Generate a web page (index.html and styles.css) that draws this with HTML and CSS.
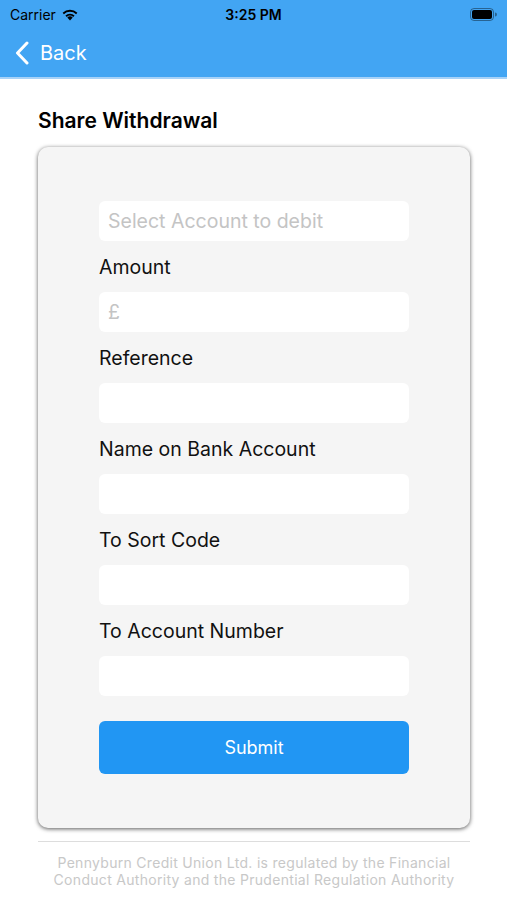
FILE: index.html
```html
<!DOCTYPE html>
<html lang="en">
<head>
    <meta charset="UTF-8">
    <meta name="viewport" content="width=device-width, initial-scale=1.0">
    <title>Share Withdrawal</title>
    <link rel="stylesheet" href="styles.css">
</head>
<body>
    <div id="header">
        <div class="statusBar">
            <div class="carrier">
                Carrier
                <svg class="wifi" width="18" height="13" viewBox="0 0 18 13">
                    <path d="M9 12.5 L6.3 9.6 A4 4 0 0 1 11.7 9.6 Z" fill="#000"/>
                    <path d="M4.4 7.6 A6.8 6.8 0 0 1 13.6 7.6 L12.3 9 A5 5 0 0 0 5.7 9 Z" fill="#000"/>
                    <path d="M1.6 4.8 A10.8 10.8 0 0 1 16.4 4.8 L15.1 6.2 A8.9 8.9 0 0 0 2.9 6.2 Z" fill="#000"/>
                </svg>
            </div>
            <div class="time">3:25 PM</div>
            <div class="battery">
                <svg width="27" height="13" viewBox="0 0 27 13">
                    <rect x="0.5" y="0.5" width="23" height="12" rx="3.5" fill="none" stroke="rgba(0,0,0,0.4)"/>
                    <rect x="2" y="2" width="20" height="9" rx="2" fill="#000"/>
                    <path d="M25 4.5 A2 2 0 0 1 25 8.5 Z" fill="rgba(0,0,0,0.4)"/>
                </svg>
            </div>
        </div>
        <div class="navBar">
            <svg class="chevron" width="14" height="24" viewBox="0 0 14 24">
                <path d="M12 2 L2.5 12 L12 22" fill="none" stroke="#fff" stroke-width="3" stroke-linecap="round" stroke-linejoin="round"/>
            </svg>
            <span>Back</span>
        </div>
    </div>
    <div id="content">
        <h1>Share Withdrawal</h1>
        <div class="card">
            <div class="field">Select Account to debit</div>
            <label>Amount</label>
            <div class="field">£</div>
            <label>Reference</label>
            <div class="field"></div>
            <label>Name on Bank Account</label>
            <div class="field"></div>
            <label>To Sort Code</label>
            <div class="field"></div>
            <label>To Account Number</label>
            <div class="field"></div>
            <div class="submit">Submit</div>
        </div>
        <div class="footer">
            Pennyburn Credit Union Ltd. is regulated by the Financial Conduct Authority and the Prudential Regulation Authority
        </div>
    </div>
</body>
</html>
```

FILE: styles.css
```css
body {
    margin: 0;
    font-family: Inter, "Liberation Sans", sans-serif;
    background-color: #fff;
    color: #111;
}
#header {
    background-color: #42a5f3;
    height: 77px;
    border-bottom: 2px solid #a7d2f8;
}
.statusBar {
    height: 28px;
    display: flex;
    align-items: center;
    justify-content: space-between;
    padding: 0 10px;
    font-size: 14px;
    color: #000;
}
.carrier {
    display: flex;
    align-items: center;
    gap: 5px;
    width: 100px;
}
.time {
    font-weight: 600;
}
.battery {
    width: 100px;
    display: flex;
    justify-content: flex-end;
}
.navBar {
    height: 49px;
    display: flex;
    align-items: center;
    padding-left: 15px;
    gap: 11px;
    color: #fff;
    font-size: 20px;
}
#content {
    padding: 0 37px 0 38px;
}
h1 {
    font-size: 21px;
    font-weight: 600;
    margin: 29px 0 14px 0;
    color: #000;
}
.card {
    background-color: #f5f5f5;
    border-radius: 10px;
    box-shadow: 0 1px 4px rgba(0, 0, 0, 0.65);
    padding: 54px 61px;
    display: flex;
    flex-direction: column;
}
.field {
    height: 40px;
    background-color: #fff;
    border-radius: 6px;
    display: flex;
    align-items: center;
    padding-left: 9px;
    font-size: 19.5px;
    color: #c4c4c4;
}
label {
    height: 51px;
    display: flex;
    align-items: center;
    font-size: 19.5px;
    color: #111;
}
.submit {
    margin-top: 25px;
    height: 53px;
    border-radius: 6px;
    background-color: #2196f3;
    color: #fff;
    font-size: 18px;
    display: flex;
    align-items: center;
    justify-content: center;
}
.footer {
    margin-top: 13px;
    border-top: 1px solid #ddd;
    padding: 12px 0 0;
    text-align: center;
    font-size: 14px;
    letter-spacing: 0.3px;
    line-height: 17px;
    color: #c8c8c8;
}
```
